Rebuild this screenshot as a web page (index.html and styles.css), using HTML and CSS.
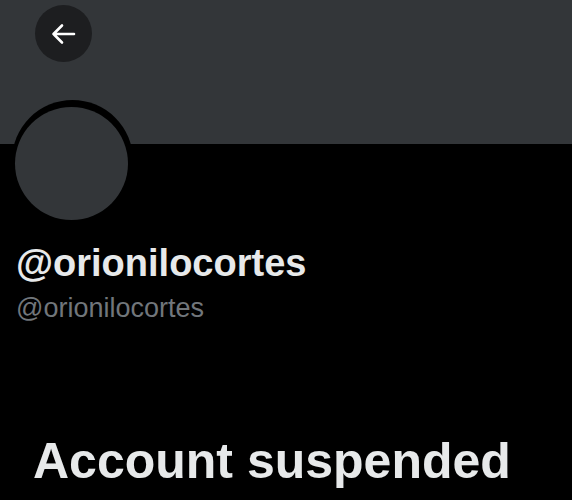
FILE: index.html
```html
<!DOCTYPE html>
<html>
<head>
<meta charset="utf-8">
<link rel="stylesheet" href="styles.css">
</head>
<body>
<div class="banner">
  <button class="back" aria-label="Back">
    <svg width="25" height="22" viewBox="0 0 25 22"><path d="M2.5 11H23M11 2.5L2.5 11L11 19.5" fill="none" stroke="#fff" stroke-width="2.6" stroke-linecap="round" stroke-linejoin="round"/></svg>
  </button>
</div>
<div class="profile">
  <div class="avatar"><div class="avatar-inner"></div></div>
  <div class="name">@orionilocortes</div>
  <div class="handle">@orionilocortes</div>
</div>
<div class="suspended">Account suspended</div>
</body>
</html>
```
FILE: styles.css
```css
html, body {
  margin: 0;
  padding: 0;
  background: #000;
  font-family: "Liberation Sans", Arial, sans-serif;
  height: 500px;
  overflow: hidden;
}
.banner {
  position: relative;
  height: 144px;
  background: #333639;
}
.back {
  position: absolute;
  left: 35px;
  top: 5px;
  width: 57px;
  height: 57px;
  border-radius: 50%;
  border: none;
  padding: 0;
  background: #1d1e20;
  display: flex;
  align-items: center;
  justify-content: center;
}
.profile {
  padding: 0 16px;
}
.avatar {
  box-sizing: border-box;
  width: 121px;
  height: 121px;
  margin-top: -44px;
  margin-left: -4px;
  padding: 7px 0 0 3px;
  border-radius: 50%;
  background: #000;
  display: flex;
  align-items: flex-start;
  justify-content: flex-start;
  position: relative;
}
.avatar-inner {
  width: 113px;
  height: 113px;
  border-radius: 50%;
  background: #333639;
}
.name {
  margin-top: 19px;
  font-size: 38px;
  line-height: 46px;
  font-weight: 700;
  color: #e7e9ea;
}
.handle {
  margin-top: 6px;
  font-size: 27px;
  line-height: 32px;
  color: #71767b;
}
.suspended {
  margin-top: 107px;
  padding-left: 33px;
  font-size: 50px;
  line-height: 60px;
  font-weight: 700;
  color: #e7e9ea;
}
```
